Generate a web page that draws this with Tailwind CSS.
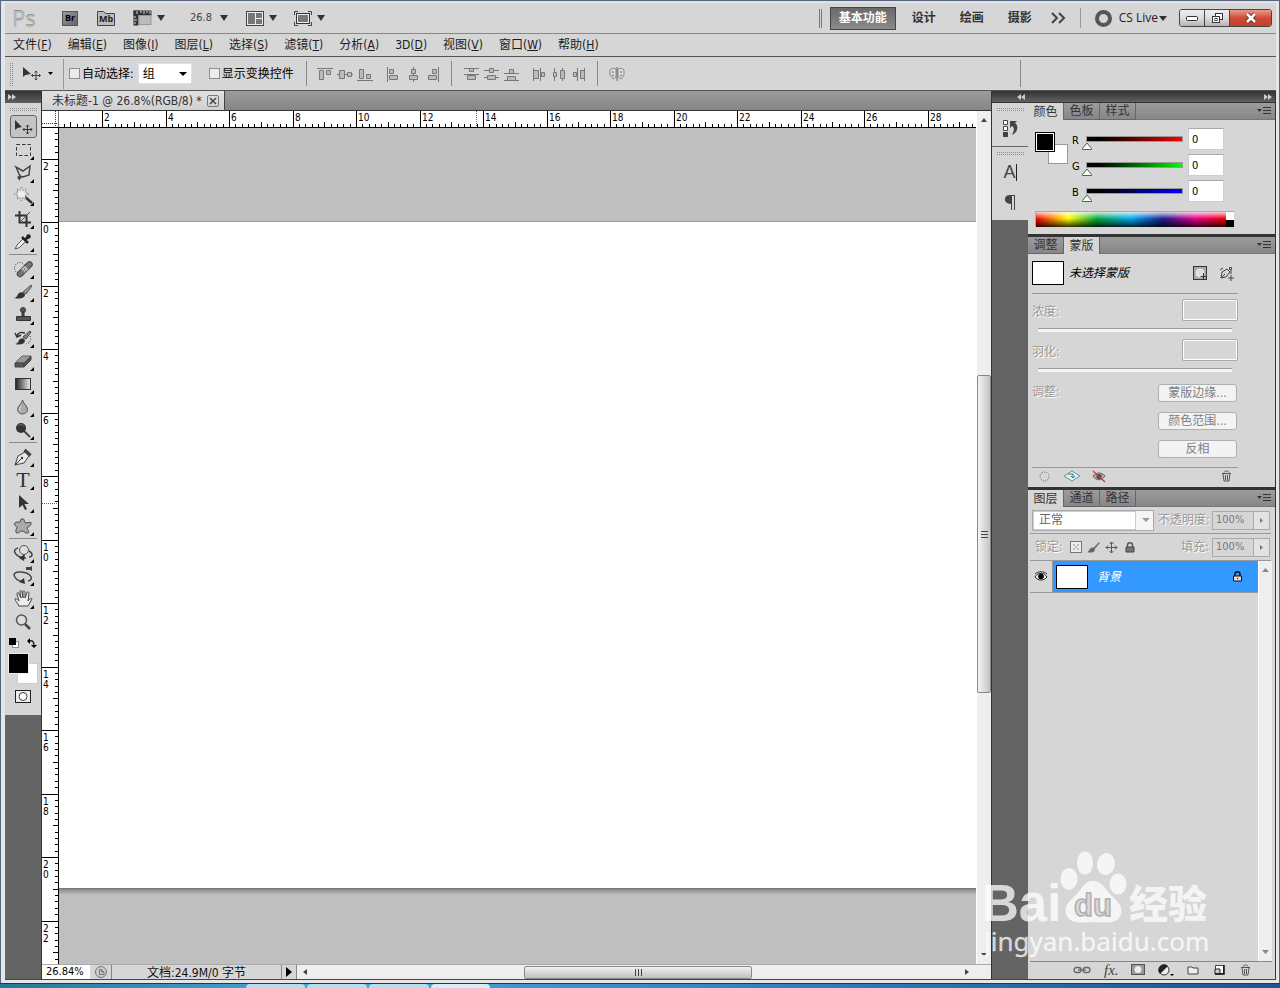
<!DOCTYPE html>
<html lang="zh-CN">
<head>
  <meta charset="UTF-8">
  <meta name="viewport" content="width=device-width, initial-scale=1.0">
  <title>未标题-1 - Photoshop</title>
  <script src="https://cdn.jsdelivr.net/npm/@tailwindcss/browser@4"></script>
  <style>
    .grip { background-image: linear-gradient(90deg, #d6d6d6 1px, transparent 1px), linear-gradient(#d6d6d6 1px, #8c8c8c 1px); background-size: 2px 2px; }
    .flyout::after { content: ""; position: absolute; right: 3px; bottom: 1px; border: 2px solid transparent; border-right-color: #000; border-bottom-color: #000; }
    .engraved { text-shadow: 1px 1px 0 #fff; }
  </style>
</head>
<body class="h-screen flex flex-col overflow-hidden bg-[#e3e3e3] text-xs leading-4 text-[#1c1c1c] font-['DejaVu_Sans_Condensed','Noto_Sans_CJK_SC',sans-serif]">

<div class="flex-1 min-h-0 flex flex-col border-x border-t border-[#56657f] pl-1 pr-[3px] pb-[3px] bg-[#e6e6e9]">

  <!-- Application bar -->
  <header class="h-8 shrink-0 flex items-center bg-[#d6d6d6] border-t-2 border-[#e4dfe4] pl-[7px] pr-1">
    <span class="w-[50px] text-[22px] leading-6 font-['Open_Sans'] text-[#b9b9b9] [text-shadow:0_-1px_0_#8e8e8e]">Ps</span>
    <button aria-label="Bridge" class="w-4 h-[15px] bg-linear-to-br from-[#999] to-[#666] border border-[#555] text-[9px] leading-3 font-bold font-['Open_Sans'] text-black">Br</button>
    <button aria-label="Mini Bridge" class="ml-[19px] relative w-[18px] h-[15px] flex justify-center">
      <svg class="absolute inset-0" width="18" height="15" viewBox="0 0 18 15"><path d="M.5 14.500V.5h6l2 2h9v12z" fill="#bbb" stroke="#444"/></svg>
      <span class="relative text-[9px] leading-4 font-bold font-['Open_Sans']">Mb</span>
    </button>
    <button aria-label="查看额外内容" class="ml-[18px] flex items-center gap-[5px]">
      <svg width="19" height="16" viewBox="0 0 19 16"><rect x=".5" y=".5" width="18" height="5" fill="#333"/><rect x=".5" y=".5" width="5" height="15" fill="#333"/><rect x="6" y="5.500" width="12" height="9" fill="#bbb" stroke="#999"/><path d="M4 1v3M8 1v2M11 1v3M14 1v2M17 1v3M1 7h2M1 10h3M1 13h2" stroke="#ddd"/></svg>
      <svg width="8" height="6"><path d="M0 0h8L4 6z" fill="#333"/></svg>
    </button>
    <button aria-label="缩放级别" class="ml-[25px] flex items-center gap-2 text-[11px] text-[#444]">26.8 <svg width="8" height="6"><path d="M0 0h8L4 6z" fill="#333"/></svg></button>
    <button aria-label="排列文档" class="ml-[18px] flex items-center gap-[5px]">
      <svg width="18" height="15" viewBox="0 0 18 15"><rect x=".5" y=".5" width="17" height="14" fill="#eee" stroke="#444"/><path d="M2 2h7v11H2zM10 2h6v5h-6zM10 8h6v5h-6z" fill="#777"/></svg>
      <svg width="8" height="6"><path d="M0 0h8L4 6z" fill="#333"/></svg>
    </button>
    <button aria-label="屏幕模式" class="ml-[17px] flex items-center gap-[5px]">
      <svg width="18" height="15" viewBox="0 0 18 15" fill="none" stroke="#444"><path d="M.5 4V.5H4M14 .5h3.500V4M17.500 11v3.500H14M4 14.500H.5V11"/><rect x="2.500" y="2.500" width="13" height="10" fill="#777" stroke="#333"/><rect x="3.500" y="3.500" width="11" height="8" stroke="#eee"/></svg>
      <svg width="8" height="6"><path d="M0 0h8L4 6z" fill="#333"/></svg>
    </button>

    <div class="ml-auto flex items-center font-bold text-[#333]">
      <i class="w-[3px] h-[19px] border-x border-[#777] mr-2"></i>
      <button class="w-[66px] h-[23px] border border-[#444] bg-linear-to-b from-[#6a6a6a] to-[#8a8a8a] text-white">基本功能</button>
      <button class="ml-4">设计</button>
      <button class="ml-6">绘画</button>
      <button class="ml-6">摄影</button>
      <button aria-label="更多工作区" class="ml-[19px]"><svg width="15" height="12" viewBox="0 0 15 12" fill="none" stroke="#444" stroke-width="2"><path d="M1 1l5 5-5 5M8 1l5 5-5 5"/></svg></button>
      <i class="ml-[14px] w-px h-5 bg-[#999]"></i>
      <button class="ml-[14px] flex items-center font-normal font-['Open_Sans'] text-[#222]">
        <svg class="mr-[7px]" width="17" height="17"><circle cx="8.500" cy="8.500" r="6.500" fill="none" stroke="#555" stroke-width="4"/></svg>CS Live
        <svg class="ml-px" width="8" height="5"><path d="M0 0h8L4 5z" fill="#333"/></svg>
      </button>
      <div class="ml-3 flex h-[18px] rounded-[3px] border border-[#444] overflow-hidden">
        <button aria-label="最小化" class="w-[25px] bg-linear-to-b from-[#eee] via-[#ddd] via-50% to-[#b5b5b5] border-r border-[#444] flex justify-center items-center"><svg width="13" height="6"><rect x=".5" y="1.500" width="11" height="4" rx="1" fill="#fff" stroke="#333"/></svg></button>
        <button aria-label="还原" class="w-[25px] bg-linear-to-b from-[#eee] via-[#ddd] via-50% to-[#b5b5b5] border-r border-[#444] flex justify-center items-center"><svg width="13" height="12" fill="#fff" stroke="#333"><rect x="4.500" y="1.500" width="7" height="6"/><rect x="1.500" y="4.500" width="7" height="6"/><rect x="4" y="6.500" width="2" height="2"/></svg></button>
        <button aria-label="关闭" class="w-[41px] bg-linear-to-b from-[#e99a8c] via-[#cf4a35] via-50% to-[#c5402c] flex justify-center items-center"><svg width="14" height="12"><path d="M3 2l8 8M11 2l-8 8" stroke="#5a3030" stroke-width="4.500"/><path d="M3 2l8 8M11 2l-8 8" stroke="#fff" stroke-width="2.500"/></svg></button>
      </div>
    </div>
  </header>

  <!-- Menu bar -->
  <nav class="h-6 shrink-0 flex items-center gap-4 pl-2 bg-[#d6d6d6] border-t border-b border-t-[#888] border-b-[#555]">
    <a href="#">文件(<u>F</u>)</a>
    <a href="#">编辑(<u>E</u>)</a>
    <a href="#">图像(<u>I</u>)</a>
    <a href="#">图层(<u>L</u>)</a>
    <a href="#">选择(<u>S</u>)</a>
    <a href="#">滤镜(<u>T</u>)</a>
    <a href="#">分析(<u>A</u>)</a>
    <a href="#">3D(<u>D</u>)</a>
    <a href="#">视图(<u>V</u>)</a>
    <a href="#">窗口(<u>W</u>)</a>
    <a href="#">帮助(<u>H</u>)</a>
  </nav>

  <!-- Options bar -->
  <div class="h-[34px] shrink-0 flex items-center bg-[#d6d6d6] border-b border-[#555] pl-1 text-black">
    <i class="grip w-1 h-6"></i>
    <button aria-label="移动工具预设" class="ml-[9px] flex items-center">
      <svg width="20" height="16" viewBox="0 0 20 16"><path d="M1 1v10l2.500-2L9 8z" fill="#333"/><path d="M14 5v9M9.500 9.500h9M12.500 6.500L14 5l1.500 1.500M12.500 12.500L14 14l1.500-1.500M11 8L9.500 9.500 11 11M17 8l1.500 1.500L17 11" fill="none" stroke="#444"/></svg>
      <svg class="ml-[6px]" width="5" height="3"><path d="M0 0h5L2.500 3z"/></svg>
    </button>
    <i class="ml-[10px] w-px h-[30px] bg-[#999]"></i>
    <label class="ml-[5px] flex items-center gap-[2px]"><input type="checkbox" class="appearance-none w-[11px] h-[11px] border border-[#8e8f8f] bg-[#ececec]">自动选择:</label>
    <select aria-label="自动选择" class="ml-1 w-[54px] h-[21px] appearance-none bg-white border border-[#dde] rounded-[2px] pl-1 leading-4">
      <option>组</option>
    </select>
    <svg class="-ml-[13px] pointer-events-none" width="8" height="4"><path d="M0 0h8L4 4z"/></svg>
    <label class="ml-[22px] flex items-center gap-[2px]"><input type="checkbox" class="appearance-none w-[11px] h-[11px] border border-[#8e8f8f] bg-[#ececec]">显示变换控件</label>
    <i class="ml-3 w-px h-[25px] bg-[#888]"></i>
    <div class="ml-[10px] flex gap-1 [&_svg]:w-4 [&_svg]:h-4 [&_svg]:fill-[#bbb] [&_svg]:stroke-[#777]">
      <button aria-label="顶对齐"><svg viewBox="0 0 16 16"><path d="M0 2.500h16"/><path d="M2.500 4.500h4v9h-4zM9.500 4.500h4v4h-4z"/></svg></button>
      <button aria-label="垂直居中对齐"><svg viewBox="0 0 16 16"><path d="M0 8.500h16"/><path d="M2.500 4.500h5v8h-5zM10.500 6.500h4v4h-4z"/></svg></button>
      <button aria-label="底对齐"><svg viewBox="0 0 16 16"><path d="M0 14.500h16"/><path d="M2.500 3.500h4v9h-4zM9.500 8.500h4v4h-4z"/></svg></button>
    </div>
    <div class="ml-3 flex gap-1 [&_svg]:w-4 [&_svg]:h-4 [&_svg]:fill-[#bbb] [&_svg]:stroke-[#777]">
      <button aria-label="左对齐"><svg viewBox="0 0 16 16"><path d="M2.500 1v15"/><path d="M4.500 3.500h4v4h-4zM4.500 9.500h8v4h-8z"/></svg></button>
      <button aria-label="水平居中对齐"><svg viewBox="0 0 16 16"><path d="M8.500 1v15"/><path d="M6.500 3.500h4v4h-4zM4.500 9.500h8v4h-8z"/></svg></button>
      <button aria-label="右对齐"><svg viewBox="0 0 16 16"><path d="M13.500 1v15"/><path d="M7.500 3.500h4v4h-4zM3.500 9.500h8v4h-8z"/></svg></button>
    </div>
    <i class="ml-[10px] w-px h-[25px] bg-[#888]"></i>
    <div class="ml-[11px] flex gap-1 [&_svg]:w-4 [&_svg]:h-4 [&_svg]:fill-[#bbb] [&_svg]:stroke-[#777]">
      <button aria-label="按顶分布"><svg viewBox="0 0 16 16"><path d="M1 2.500h15M1 8.500h15"/><path d="M6.500 2.500h4v3h-4zM4.500 9.500h8v4h-8z"/></svg></button>
      <button aria-label="按垂直居中分布"><svg viewBox="0 0 16 16"><path d="M1 4.500h15M1 11.500h15"/><path d="M6.500 2.500h4v4h-4zM4.500 9.500h8v4h-8z"/></svg></button>
      <button aria-label="按底分布"><svg viewBox="0 0 16 16"><path d="M1 7.500h15M1 14.500h15"/><path d="M6.500 3.500h4v4h-4zM4.500 10.500h8v4h-8z"/></svg></button>
    </div>
    <div class="ml-3 flex gap-1 [&_svg]:w-4 [&_svg]:h-4 [&_svg]:fill-[#bbb] [&_svg]:stroke-[#777]">
      <button aria-label="按左分布"><svg viewBox="0 0 16 16"><path d="M2.500 2v13M9.500 2v13"/><path d="M2.500 4.500h5v8h-5zM10.500 6.500h3v4h-3z"/></svg></button>
      <button aria-label="按水平居中分布"><svg viewBox="0 0 16 16"><path d="M3.500 2v13M11.500 2v13"/><path d="M2.500 6.500h3v4h-3zM9.500 4.500h4v8h-4z"/></svg></button>
      <button aria-label="按右分布"><svg viewBox="0 0 16 16"><path d="M6.500 2v13M13.500 2v13"/><path d="M2.500 6.500h3v4h-3zM9.500 4.500h4v8h-4z"/></svg></button>
    </div>
    <i class="ml-[10px] w-px h-[25px] bg-[#888]"></i>
    <button aria-label="自动对齐图层" class="ml-[11px]"><svg width="16" height="16" viewBox="0 0 16 16" stroke="#888" fill="#ddd"><path d="M1 4l3-2 3 1v8l-3 2-3-4zM15 4l-3-2-3 1v8l3 2 3-4z"/><path d="M3 6h2M11 6h2M3 9l2 1M13 9l-2 1M8 1v14" stroke="#666"/></svg></button>
    <i class="ml-auto mr-[255px] w-px h-[27px] bg-[#888]"></i>
  </div>

  <div class="flex-1 min-h-0 flex border-b border-[#444]">

    <!-- Tools -->
    <aside class="w-[37px] shrink-0 flex flex-col bg-[#646464] border-r border-[#333]">
      <div class="h-3 shrink-0 bg-linear-to-b from-[#333] to-[#606060] pl-[3px] flex items-center"><svg width="8" height="6"><path d="M0 0l4 3-4 3zM4 0l4 3-4 3z" fill="#ccc"/></svg></div>
      <div class="h-[612px] bg-[#d6d6d6] flex flex-col items-center pt-1 [&_button]:w-[27px] [&_button]:h-[23px] [&_button]:flex [&_button]:items-center [&_button]:justify-center [&_button]:relative [&_svg]:w-5 [&_svg]:h-5">
        <i class="grip w-7 h-1 mb-1 shrink-0"></i>
        <button aria-label="移动工具" class="border border-[#666] rounded-[3px] bg-[#c4c4c4]"><svg viewBox="0 0 20 20"><path d="M2 3v10l2.500-2L9 10z" fill="#333"/><path d="M14.500 8v9M10 12.500h9M13 9.500L14.500 8 16 9.500M13 15.500l1.500 1.500 1.500-1.500M11.500 11L10 12.500l1.500 1.500M17.500 11l1.500 1.500-1.500 1.500" fill="none" stroke="#333"/></svg></button>
        <button aria-label="矩形选框工具" class="flyout"><svg viewBox="0 0 20 20"><rect x="3.500" y="4.500" width="14" height="11" fill="none" stroke="#333" stroke-dasharray="3.500 2"/></svg></button>
        <button aria-label="多边形套索工具" class="flyout"><svg viewBox="0 0 20 20" fill="none" stroke="#444" stroke-width="1.500"><path d="M7 13L3 4l7 4 7-5-1 9-6 2-3-1M7 13c-3 1-2 3 0 2s1-2 0-2c1 2 0 3-1 4"/></svg></button>
        <button aria-label="魔棒工具" class="flyout"><svg viewBox="0 0 20 20"><path d="M11 10l8 7" stroke="#333" stroke-width="2.500"/><path d="M8.500 1l1.200 3.500 3.500-1.500L12 6.500l4 1.500-4 1.500 1 3.500-3.300-1.500L8.500 15l-1.200-3.500L4 13l1.200-3.500L1 8l4-1.500L4 3l3.300 1.500z" fill="#eee" stroke="#888" stroke-dasharray="2 1"/></svg></button>
        <button aria-label="裁剪工具" class="flyout"><svg viewBox="0 0 20 20" fill="none"><path d="M6.500 2v11.500H18M2 6.500h11.500V18" stroke="#333" stroke-width="2"/><path d="M7 13L17 3" stroke="#555"/></svg></button>
        <button aria-label="吸管工具" class="flyout"><svg viewBox="0 0 20 20"><path d="M2 17l2-4 6-6 2.500 2.500-6 6z" fill="#eee" stroke="#555"/><path d="M9 5l6 6M12 8l3-3" stroke="#222" stroke-width="2.500"/><circle cx="15.500" cy="4.500" r="2.300" fill="#222"/></svg></button>
        <i class="w-7 h-px mt-px mb-[2px] shrink-0 bg-[#888]"></i>
        <button aria-label="污点修复画笔工具" class="flyout"><svg viewBox="0 0 20 20"><circle cx="7" cy="9" r="5.500" fill="none" stroke="#333" stroke-dasharray="1 1.500"/><path d="M7 15L16.500 5.500" stroke="#444" stroke-width="6.500" stroke-linecap="round"/><path d="M7 15L16.500 5.500" stroke="#777" stroke-width="4.500" stroke-linecap="round"/><path d="M10 12l3.500-3.500" stroke="#bbb" stroke-width="5"/><path d="M11 10h1M12 12h1M10 12h1" stroke="#555"/></svg></button>
        <button aria-label="画笔工具" class="flyout"><svg viewBox="0 0 20 20"><path d="M10 10l8-7 1 1-6 8z" fill="#999" stroke="#555"/><path d="M1 16c3 0 3-3 5-5 3-2 6 0 6 2-1 4-7 4-11 3z" fill="#333"/></svg></button>
        <button aria-label="仿制图章工具" class="flyout"><svg viewBox="0 0 20 20" fill="#555" stroke="#333"><circle cx="10" cy="5" r="2.500"/><path d="M9 7h2v4H9zM3.500 11.500h14v4h-14z"/></svg></button>
        <button aria-label="历史记录画笔工具" class="flyout"><svg viewBox="0 0 20 20"><path d="M10 9l7-6 1 1-5 7z" fill="#888" stroke="#444"/><path d="M2 16c3 0 3-3 5-5 3-2 5 0 5 2-1 4-6 4-10 3z" fill="#333"/><path d="M4 8c1-4 5-4 8-3M2 5l2 4 4-2" fill="none" stroke="#333" stroke-width="1.500"/><path d="M17 8c2 4 0 7-4 8" fill="none" stroke="#444" stroke-dasharray="1 1.500"/></svg></button>
        <button aria-label="橡皮擦工具" class="flyout"><svg viewBox="0 0 20 20"><path d="M2 12l7-7h9l-7 7z" fill="#999" stroke="#666"/><path d="M2 12h9v4H2zM11 12l7-7v4l-7 7z" fill="#555" stroke="#444"/></svg></button>
        <button aria-label="渐变工具" class="flyout"><svg viewBox="0 0 20 20"><defs><linearGradient id="ramp"><stop stop-color="#222"/><stop offset="1" stop-color="#eee"/></linearGradient></defs><rect x="2.500" y="4.500" width="15" height="11" fill="url(#ramp)" stroke="#333"/></svg></button>
        <button aria-label="模糊工具" class="flyout"><svg viewBox="0 0 20 20"><path d="M9.500 3c1 4 5 6 5 9.500a5 4.500 0 01-10 0C4.500 9 9 7 9.500 3z" fill="#aaa" stroke="#555"/><path d="M8 9c-2 3-1 5 0 5" stroke="#ddd" fill="none"/></svg></button>
        <button aria-label="加深工具" class="flyout"><svg viewBox="0 0 20 20"><path d="M11 11l6 6" stroke="#444" stroke-width="2"/><circle cx="8" cy="8" r="5" fill="#333"/><path d="M5 6c1-2 4-2 6 0" stroke="#777" fill="none"/></svg></button>
        <i class="w-7 h-px mt-px mb-[2px] shrink-0 bg-[#888]"></i>
        <button aria-label="钢笔工具" class="flyout"><svg viewBox="0 0 20 20"><path d="M2 18l3-9 7-4 4 4-5 7z" fill="#e8e8e8" stroke="#444"/><path d="M2 18l6-6" stroke="#333"/><circle cx="9" cy="11" r="1.200" fill="#333"/><path d="M11.500 3l6 5.500" stroke="#444" stroke-width="3.500"/></svg></button>
        <button aria-label="横排文字工具" class="flyout font-['Liberation_Serif'] text-[22px] text-[#333]">T</button>
        <button aria-label="路径选择工具" class="flyout"><svg viewBox="0 0 20 20"><path d="M6 2v13l3.500-3 2.500 5 2-1-2.500-5H16z" fill="#333"/></svg></button>
        <button aria-label="自定形状工具" class="flyout"><svg viewBox="0 0 20 20"><path d="M9 3c3-1 2 4 4 4s6-2 5 1-4 3-4 4 3 4 1 5-4-2-6-2-5 4-6 1 2-4 1-5-4-2-2-4 4 0 5-1 0-3 2-3z" fill="#aaa" stroke="#444"/></svg></button>
        <i class="w-7 h-px mt-px mb-[2px] shrink-0 bg-[#888]"></i>
        <button aria-label="3D 对象旋转工具" class="flyout"><svg viewBox="0 0 20 20"><path d="M5 5c-8 2-1 10 8 10M16 8c4 2 4 6 0 6" fill="none" stroke="#444" stroke-width="1.500"/><path d="M12 11l-1 7-5-3z" fill="#333"/><circle cx="11" cy="7" r="4.500" fill="#ddd" stroke="#555"/></svg></button>
        <button aria-label="3D 旋转相机工具" class="flyout"><svg viewBox="0 0 20 20"><path d="M8 6c-11-1-8 8 3 10M8 6c11 1 13 8 7 9" fill="none" stroke="#444" stroke-width="1.500"/><path d="M11 12l1 6-6-2z" fill="#333"/><path d="M13 1h4l2-1v5l-2-1h-4z" fill="#444"/></svg></button>
        <button aria-label="抓手工具" class="flyout"><svg viewBox="0 0 20 20"><path d="M6 17c-1-3-4-5-4-7 1-1 2 0 4 2L4 5c0-2 2-2 2 0l2 4-1-6c0-2 2-2 2 0l1 6V3c0-2 2-1 2 0v6l2-5c0-2 2-1 2 0l-1 8c2-3 4-3 4-2l-4 7z" fill="#eee" stroke="#444"/></svg></button>
        <button aria-label="缩放工具"><svg viewBox="0 0 20 20"><path d="M12 12l5 5" stroke="#444" stroke-width="2.500"/><circle cx="8.500" cy="8" r="5" fill="#ddd" stroke="#555" stroke-width="1.500"/></svg></button>
        <div class="w-7 h-3 mt-[5px] shrink-0 flex justify-between">
          <svg class="max-w-[10px] max-h-[10px]" viewBox="0 0 10 10"><rect x="3.500" y="3.500" width="6" height="6" fill="#fff" stroke="#888"/><rect width="7" height="7"/></svg>
          <svg class="max-w-[10px] max-h-[10px]" viewBox="0 0 10 10"><path d="M2 3c4-1 5 1 5 5" fill="none" stroke="#222" stroke-width="1.500"/><path d="M0 3l3-3v6zM4 7h6L7 10z"/></svg>
        </div>
        <div class="relative w-[30px] h-[31px] mt-[3px] shrink-0">
          <i class="absolute right-0 bottom-0 w-[21px] h-[21px] bg-white border border-[#ccc]"></i>
          <i class="absolute left-0 top-0 w-[21px] h-[21px] bg-black border border-[#eee]"></i>
        </div>
        <button aria-label="快速蒙版"><svg viewBox="0 0 20 20"><rect x="2.500" y="4.500" width="15" height="12" fill="#eee" stroke="#222"/><circle cx="10" cy="10.500" r="4" fill="#fff" stroke="#444"/></svg></button>
      </div>
    </aside>

    <!-- Document -->
    <main class="flex-1 min-w-0 flex flex-col bg-[#d6d6d6]">
      <div class="h-5 shrink-0 flex bg-linear-to-b from-[#9c9c9c] to-[#858585] border-b border-[#333]">
        <div class="w-[183px] flex items-center pl-[10px] bg-linear-to-b from-[#e2e2e2] to-[#d0d0d0] border-r border-[#444] text-[#333]">未标题-1 @ 26.8%(RGB/8) *
          <button aria-label="关闭文档" class="ml-auto mr-[5px]"><svg width="12" height="12" viewBox="0 0 12 12" fill="none" stroke="#444"><rect x=".5" y=".5" width="11" height="11" rx="1.500" stroke="#777"/><path d="M3 3l6 6M9 3l-6 6" stroke-width="1.500"/></svg></button>
        </div>
      </div>
      <div class="flex-1 min-h-0 flex">
        <div class="flex-1 min-w-0 flex flex-col bg-white">
          <div class="h-[17px] shrink-0 flex border-b border-black">
            <svg class="w-[17px] h-4 shrink-0 border-r border-[#777]"><path d="M13.500 0v16M0 12.500h17" stroke="#333" stroke-dasharray="1 1"/></svg>
            <svg id="ruler-x" class="flex-1 min-w-0 h-4" font-size="10"></svg>
          </div>
          <div class="flex-1 min-h-0 flex">
            <svg id="ruler-y" class="w-[17px] h-full shrink-0 border-r border-black" font-size="10"></svg>
            <div class="flex-1 flex flex-col bg-[#bfbfbf]">
              <div class="h-[94px] shrink-0 border-b border-[#999]"></div>
              <div class="flex-1 bg-white"></div>
              <div class="h-[76px] shrink-0 border-t border-[#777] bg-linear-to-b from-[#888] to-[#bfbfbf] to-[6px]"></div>
            </div>
          </div>
        </div>
        <div class="w-[15px] shrink-0 flex flex-col items-center bg-[#eee] border-l border-white py-[7px]">
          <svg width="6" height="4" class="shrink-0"><path d="M0 4l3-4 3 4z" fill="#444"/></svg>
          <div class="flex-1 w-full flex flex-col">
            <div class="h-[253px] shrink-0"></div>
            <div class="h-[318px] border border-[#888] rounded-[2px] bg-linear-to-r from-[#f4f4f4] to-[#c4c4c8] flex items-center justify-center"><svg width="7" height="9"><path d="M0 1.500h7M0 4.500h7M0 7.500h7" stroke="#444"/></svg></div>
          </div>
          <svg width="6" height="4" class="shrink-0"><path d="M0 0h6L3 4z" fill="#444"/></svg>
        </div>
      </div>
      <div class="h-[15px] shrink-0 flex border-t border-[#aaa] text-black">
        <input aria-label="缩放" value="26.84%" class="w-[48px] bg-white pl-1 text-[11px] leading-4">
        <div class="w-[21px] flex items-center justify-center"><svg width="12" height="12" viewBox="0 0 12 12" fill="#ccc" stroke="#777"><circle cx="6" cy="6" r="5.500"/><path d="M4.500 3.500h2l2.500 2.500v2.500h-4.500zM6.500 3.500v2.500h2.500"/></svg></div>
        <div class="w-[171px] border-x border-[#888] text-center leading-4 text-[#111]">文档:24.9M/0 字节</div>
        <button aria-label="状态栏选项" class="w-[15px] border-r border-[#888] flex items-center justify-center"><svg width="6" height="10"><path d="M0 0l6 5-6 5z"/></svg></button>
        <div class="flex-1 flex items-center bg-[#eee] px-[6px]">
          <svg width="4" height="6"><path d="M4 0L0 3l4 3z" fill="#444"/></svg>
          <div class="w-[217px]"></div>
          <div class="w-[228px] h-[13px] border border-[#888] rounded-[2px] bg-linear-to-b from-[#f0f0f0] to-[#c0c0c0] flex items-center justify-center"><svg width="9" height="7"><path d="M1.500 0v7M4.500 0v7M7.500 0v7" stroke="#444"/></svg></div>
          <svg class="ml-auto mr-4" width="4" height="6"><path d="M0 0l4 3-4 3z" fill="#444"/></svg>
        </div>
      </div>
    </main>

    <!-- Dock -->
    <aside class="w-[285px] shrink-0 flex flex-col bg-[#646464] border-x border-[#333]">
      <div class="h-3 shrink-0 flex items-center justify-between bg-linear-to-b from-[#333] to-[#606060] pl-[25px] pr-[3px] border-b border-[#333]">
        <svg width="8" height="6"><path d="M4 0L0 3l4 3zM8 0L4 3l4 3z" fill="#ccc"/></svg>
        <svg width="8" height="6"><path d="M0 0l4 3-4 3zM4 0l4 3-4 3z" fill="#ccc"/></svg>
      </div>
      <div class="flex-1 min-h-0 flex">
        <div class="w-9 shrink-0 text-[#444]">
          <div class="h-[43px] bg-[#d6d6d6] flex flex-col items-center pt-1">
            <i class="grip w-7 h-1"></i>
            <button aria-label="历史记录" class="mt-2"><svg width="16" height="18" viewBox="0 0 16 18"><path d="M1.500 1.500h4v4h-4zM1.500 7.500h4v4h-4z" fill="#fff" stroke="#444"/><path d="M1 13h5v5H1z" fill="#444"/><path d="M8 2h7l-2 2c4 3 3 9-3 12 2-4 3-7 0-9L8 9z" fill="#444"/></svg></button>
          </div>
          <div class="mt-px h-[73px] bg-[#d6d6d6] flex flex-col items-center pt-1">
            <i class="grip w-7 h-1 shrink-0"></i>
            <button aria-label="字符" class="mt-[7px] flex items-center text-[18px] leading-5 font-['Liberation_Sans']">A<i class="w-px h-[17px] bg-[#222]"></i></button>
            <button aria-label="段落" class="mt-[13px]"><svg width="12" height="15" viewBox="0 0 12 15"><path d="M6 0h5v15h-1V1H8v14H7V9C-1 9-1 0 6 0z" fill="#444"/></svg></button>
          </div>
        </div>

        <div class="flex-1 min-w-0 flex flex-col bg-[#333] text-[#333]">
          <!-- Color -->
          <section class="bg-[#d6d6d6]">
            <div class="h-[17px] flex bg-linear-to-b from-[#9c9c9c] to-[#858585]">
              <button class="w-9 bg-[#d6d6d6] border-r border-[#666]">颜色</button>
              <button class="w-9 border-r border-b border-[#666]">色板</button>
              <button class="w-9 border-r border-b border-[#666]">样式</button>
              <button aria-label="面板菜单" class="flex-1 flex justify-end items-center pr-1 border-b border-[#777]"><svg width="14" height="9" fill="none" stroke="#333"><path d="M0 2h5L2.500 5z" fill="#333" stroke="none"/><path d="M6 .5h8M6 3.500h8M6 6.500h8"/></svg></button>
            </div>
            <div class="h-[114px] pl-[7px] pt-[9px] text-black">
              <div class="flex">
                <div class="relative w-[33px] h-8 mt-[3px]">
                  <i class="absolute right-0 bottom-0 w-5 h-5 bg-white border border-[#999]"></i>
                  <i class="absolute left-0 top-0 w-5 h-5 bg-black border border-black ring-1 ring-inset ring-white"></i>
                </div>
                <div class="ml-1 flex flex-col gap-[6px]">
                  <label class="h-5 flex items-center text-[11px]"><span class="w-[14px] pt-[3px]">R</span>
                    <span class="relative w-[97px] h-[14px]"><span class="block h-[6px] mt-1 border border-[#999] bg-linear-to-r from-black to-[#f00]"></span><svg class="absolute -left-1 top-[10px]" width="10" height="8"><path d="M.5 6.500L5 1l4.500 5.500v1h-9z" fill="#fff" stroke="#2b7a2b"/></svg><input type="range" value="0" max="255" class="absolute inset-0 w-full h-full opacity-0"></span>
                    <input aria-label="R 值" value="0" class="ml-[5px] w-9 h-[22px] bg-white border border-[#ccd] border-t-[#aaa] pl-[3px]"></label>
                  <label class="h-5 flex items-center text-[11px]"><span class="w-[14px] pt-[3px]">G</span>
                    <span class="relative w-[97px] h-[14px]"><span class="block h-[6px] mt-1 border border-[#999] bg-linear-to-r from-black to-[#0f0]"></span><svg class="absolute -left-1 top-[10px]" width="10" height="8"><path d="M.5 6.500L5 1l4.500 5.500v1h-9z" fill="#fff" stroke="#2b7a2b"/></svg><input type="range" value="0" max="255" class="absolute inset-0 w-full h-full opacity-0"></span>
                    <input aria-label="G 值" value="0" class="ml-[5px] w-9 h-[22px] bg-white border border-[#ccd] border-t-[#aaa] pl-[3px]"></label>
                  <label class="h-5 flex items-center text-[11px]"><span class="w-[14px] pt-[3px]">B</span>
                    <span class="relative w-[97px] h-[14px]"><span class="block h-[6px] mt-1 border border-[#999] bg-linear-to-r from-black to-[#00f]"></span><svg class="absolute -left-1 top-[10px]" width="10" height="8"><path d="M.5 6.500L5 1l4.500 5.500v1h-9z" fill="#fff" stroke="#2b7a2b"/></svg><input type="range" value="0" max="255" class="absolute inset-0 w-full h-full opacity-0"></span>
                    <input aria-label="B 值" value="0" class="ml-[5px] w-9 h-[22px] bg-white border border-[#ccd] border-t-[#aaa] pl-[3px]"></label>
                </div>
              </div>
              <div class="mt-[10px] w-[199px] h-4 flex border-t border-l border-[#aaa]">
                <div class="flex-1 bg-[linear-gradient(to_bottom,#fffc,transparent_45%,#000c),linear-gradient(to_right,#e00,#ff0_17%,#00a63c_32%,#00a8f0_50%,#1c1c8c_67%,#e6008c_84%,#e00)]"></div>
                <div class="w-2 bg-linear-to-b from-white from-50% to-black to-50%"></div>
              </div>
            </div>
          </section>

          <!-- Masks -->
          <section class="mt-[3px] bg-[#d6d6d6]">
            <div class="h-[17px] flex bg-linear-to-b from-[#9c9c9c] to-[#858585]">
              <button class="w-9 border-r border-b border-[#666]">调整</button>
              <button class="w-9 bg-[#d6d6d6] border-r border-[#666]">蒙版</button>
              <button aria-label="面板菜单" class="flex-1 flex justify-end items-center pr-1 border-b border-[#777]"><svg width="14" height="9" fill="none" stroke="#333"><path d="M0 2h5L2.500 5z" fill="#333" stroke="none"/><path d="M6 .5h8M6 3.500h8M6 6.500h8"/></svg></button>
            </div>
            <div class="h-[233px] pl-1 pr-[37px] pt-[7px] text-[#999]">
              <div class="flex items-center h-6">
                <i class="w-8 h-6 bg-white border border-black"></i>
                <em class="ml-[5px] text-black">未选择蒙版</em>
                <button aria-label="添加像素蒙版" class="ml-auto"><svg width="14" height="14" viewBox="0 0 14 14" fill="none" stroke="#333"><rect x=".5" y=".5" width="13" height="13" fill="#aaa"/><circle cx="7" cy="7" r="4" fill="#ddd" stroke="#eee"/><path d="M10.500 7v6M7.500 10.500h6"/></svg></button>
                <button aria-label="添加矢量蒙版" class="ml-3 mr-1"><svg width="15" height="15" viewBox="0 0 15 15" fill="none" stroke="#444"><path d="M2 12l1-6 5-3 3 3-4 5-5 1zM2 12l4-4M1 4l3-2M12 8V4M10.500 1.500h2v2h-2zM12 9v6M9 12h6"/></svg></button>
              </div>
              <i class="block mt-2 h-px bg-[#999]"></i>
              <div class="mt-[5px] flex items-center justify-between"><label for="density" class="engraved pt-[3px]">浓度:</label><input id="density" disabled class="w-14 h-[22px] border border-[#aaa] ring-1 ring-inset ring-white rounded-[2px]"></div>
              <input type="range" aria-label="浓度" disabled class="appearance-none block mx-[6px] w-[194px] mt-[7px] h-1 border-t border-[#999] bg-[#f4f4f4] [&::-webkit-slider-thumb]:opacity-0">
              <div class="mt-[7px] flex items-center justify-between"><label for="feather" class="engraved pt-[3px]">羽化:</label><input id="feather" disabled class="w-14 h-[22px] border border-[#aaa] ring-1 ring-inset ring-white rounded-[2px]"></div>
              <input type="range" aria-label="羽化" disabled class="appearance-none block mx-[6px] w-[194px] mt-[7px] h-1 border-t border-[#999] bg-[#f4f4f4] [&::-webkit-slider-thumb]:opacity-0">
              <div class="mt-3 flex justify-between">
                <span class="engraved">调整:</span>
                <div class="flex flex-col gap-[10px] mr-px [&_button]:w-[79px] [&_button]:h-[18px] [&_button]:border [&_button]:border-[#aab0b4] [&_button]:rounded-[3px] [&_button]:bg-[#f3f3f3] [&_button]:text-[#808080]">
                  <button disabled>蒙版边缘...</button>
                  <button disabled>颜色范围...</button>
                  <button disabled>反相</button>
                </div>
              </div>
              <i class="block mt-[9px] h-px bg-[#999]"></i>
              <div class="h-4 flex items-center pl-[7px] pr-[6px]">
                <svg width="11" height="11"><circle cx="5.500" cy="5.500" r="4.500" fill="none" stroke="#555" stroke-dasharray="1 1.500"/></svg>
                <svg class="ml-[13px]" width="18" height="12" viewBox="0 0 18 12"><path d="M1 6l8-5 8 5-8 5z" fill="#dfeee8" stroke="#6a9a8a"/><path d="M5 4h5v4M8 6l2 2 2-2" fill="none" stroke="#2a7aaa"/></svg>
                <svg class="ml-[11px]" width="14" height="13" viewBox="0 0 14 13"><path d="M1 6c3-4 9-4 12 0-3 5-9 5-12 0z" fill="#aaa" stroke="#666"/><circle cx="7" cy="6.500" r="2.500" fill="#444"/><path d="M1 1l12 11" stroke="#d33" stroke-width="1.300"/></svg>
                <svg class="ml-auto" width="11" height="12" viewBox="0 0 11 12" fill="none" stroke="#555"><path d="M1 3.500h9M3 2.500c1-2 4-2 5 0M2 4l1 7h5l1-7M4.500 5v5M6.500 5v5"/></svg>
              </div>
            </div>
          </section>

          <!-- Layers -->
          <section class="mt-[3px] flex-1 min-h-0 flex flex-col bg-[#d6d6d6]">
            <div class="h-[17px] shrink-0 flex bg-linear-to-b from-[#9c9c9c] to-[#858585]">
              <button class="w-9 bg-[#d6d6d6] border-r border-[#666]">图层</button>
              <button class="w-9 border-r border-b border-[#666]">通道</button>
              <button class="w-9 border-r border-b border-[#666]">路径</button>
              <button aria-label="面板菜单" class="flex-1 flex justify-end items-center pr-1 border-b border-[#777]"><svg width="14" height="9" fill="none" stroke="#333"><path d="M0 2h5L2.500 5z" fill="#333" stroke="none"/><path d="M6 .5h8M6 3.500h8M6 6.500h8"/></svg></button>
            </div>
            <div class="h-[27px] shrink-0 flex items-center ml-[2px] mr-1 pl-[2px] border-b border-[#999] text-[#999]">
              <div class="w-[122px] h-[21px] flex items-center border border-[#aaa] bg-[#f6f6f6]">
                <select aria-label="混合模式" disabled class="appearance-none w-[103px] h-[19px] bg-white border border-[#ccc] pl-[5px] text-[#666] opacity-100"><option>正常</option></select>
                <svg class="ml-[6px]" width="8" height="4"><path d="M0 0h8L4 4z" fill="#999"/></svg>
              </div>
              <label for="opacity" class="engraved ml-1">不透明度:</label>
              <div class="ml-auto mr-px w-[58px] h-[19px] flex border border-[#aaa]">
                <input id="opacity" value="100%" disabled class="w-10 pl-[3px] text-[11px] text-[#777]">
                <button aria-label="调整不透明度" class="flex-1 border-l border-[#aaa] bg-[#e2e2e2] flex items-center justify-center"><svg width="3" height="5"><path d="M0 0l3 2.500L0 5z" fill="#777"/></svg></button>
              </div>
            </div>
            <div class="h-[27px] shrink-0 flex items-center ml-[2px] mr-1 pl-[5px] border-b border-[#999] text-[#999]">
              <span class="engraved">锁定:</span>
              <svg class="ml-[7px]" width="12" height="12" viewBox="0 0 12 12"><rect x=".5" y=".5" width="11" height="11" fill="#eee" stroke="#777"/><path d="M3 3h2v2H3zM7 3h2v2H7zM5 5h2v2H5zM3 7h2v2H3zM7 7h2v2H7z" fill="#bbb"/></svg>
              <svg class="ml-[5px]" width="13" height="12" viewBox="0 0 13 12"><path d="M6 7l6-6 1 1-5 6z" fill="#777"/><path d="M0 11c2 0 2-3 4-4 2-1 4 0 4 2-1 3-5 3-8 2z" fill="#666"/></svg>
              <svg class="ml-[5px]" width="13" height="13" viewBox="0 0 13 13" fill="none" stroke="#555"><path d="M6.500 1v11M1 6.500h11M4.500 3l2-2 2 2M4.500 10l2 2 2-2M3 4.500l-2 2 2 2M10 4.500l2 2-2 2"/></svg>
              <svg class="ml-[7px]" width="10" height="11" viewBox="0 0 10 11"><path d="M2.500 5V3c0-3 5-3 5 0v2" fill="none" stroke="#555" stroke-width="1.500"/><path d="M1 5h8v5H1z" fill="#777" stroke="#444"/></svg>
              <label for="fill" class="engraved ml-auto">填充:</label>
              <div class="ml-[3px] mr-px w-[58px] h-[19px] flex border border-[#aaa]">
                <input id="fill" value="100%" disabled class="w-10 pl-[3px] text-[11px] text-[#777]">
                <button aria-label="调整填充" class="flex-1 border-l border-[#aaa] bg-[#e2e2e2] flex items-center justify-center"><svg width="3" height="5"><path d="M0 0l3 2.500L0 5z" fill="#777"/></svg></button>
              </div>
            </div>
            <div class="flex-1 min-h-0 flex ml-[2px] mr-[3px] border-b border-[#888]">
              <div class="flex-1">
                <div class="h-8 flex items-center border-b border-[#999]">
                  <button aria-label="显示图层" class="w-[23px] h-full border-r border-[#999] flex items-center justify-center"><svg width="14" height="11" viewBox="0 0 14 11"><path d="M1 6c3-5 9-5 12 0-3 4-9 4-12 0z" fill="#eee" stroke="#222"/><circle cx="7" cy="5.500" r="2.800"/><path d="M1 3c3-3 9-3 12 0" fill="none" stroke="#333"/></svg></button>
                  <div class="flex-1 h-full flex items-center bg-[#3399ff] text-white pl-[3px] pr-[15px]">
                    <i class="w-8 h-6 bg-white border border-black"></i>
                    <em class="ml-[9px]">背景</em>
                    <svg class="ml-auto" width="11" height="11" viewBox="0 0 11 11"><path d="M3 5V3c0-3 5-3 5 0v2" fill="none" stroke="#111" stroke-width="1.500"/><path d="M1.500 5h8v5h-8z" fill="#ddd" stroke="#111"/><path d="M5 7h1v1H5z"/></svg>
                  </div>
                </div>
              </div>
              <div class="w-[14px] bg-[#eee] flex flex-col items-center justify-between py-[7px] border-l border-white">
                <svg width="7" height="4"><path d="M0 4l3.500-4L7 4z" fill="#888"/></svg>
                <svg width="7" height="4"><path d="M0 0h7L3.500 4z" fill="#888"/></svg>
              </div>
            </div>
            <div class="h-[17px] shrink-0 flex items-center justify-end gap-[13px] pr-6 pb-[2px]">
              <svg width="18" height="8" viewBox="0 0 18 8" fill="none" stroke="#666" stroke-width="1.300"><rect x="1" y="1.500" width="7" height="5" rx="2.500"/><rect x="10" y="1.500" width="7" height="5" rx="2.500"/><path d="M5 4h8"/></svg>
              <span class="w-[14px] text-[15px] italic leading-4 font-['Liberation_Serif'] text-[#444]">fx.</span>
              <svg width="14" height="11" viewBox="0 0 14 11"><rect x=".5" y=".5" width="13" height="10" fill="#999" stroke="#555"/><circle cx="7" cy="5.500" r="3.500" fill="#eee"/></svg>
              <svg width="16" height="12" viewBox="0 0 16 12"><circle cx="6" cy="6" r="5" fill="#eee" stroke="#333"/><path d="M10 2a5 5 0 00-8 8z" fill="#222"/><path d="M12 10h4l-2 2z"/></svg>
              <svg width="12" height="10" viewBox="0 0 12 10"><path d="M1 9V2h4l1 1h5v6z" fill="#eee" stroke="#444"/></svg>
              <svg class="ml-[2px]" width="11" height="11" viewBox="0 0 11 11"><path d="M1.500 1.500h8v8h-8z" fill="#fff" stroke="#444"/><path d="M1 5h5v5H1z" fill="#ccc" stroke="#222"/><path d="M10 1v9H1" fill="none" stroke="#111" stroke-width="1.500"/></svg>
              <svg class="ml-[2px]" width="11" height="12" viewBox="0 0 11 12" fill="none" stroke="#555"><path d="M1 3.500h9M3 2.500c1-2 4-2 5 0M2 4l1 7h5l1-7M4.500 5v5M6.500 5v5"/></svg>
            </div>
          </section>
        </div>
      </div>
    </aside>
  </div>
</div>

<!-- Desktop taskbar edge -->
<footer class="h-[5px] shrink-0 flex gap-[2px] pl-[246px] border-t border-[#1d3a5a] bg-linear-to-r from-[#1f7d96] via-[#4aa8dc] via-25% to-[#1d568f]">
  <i class="w-[59px] rounded-t bg-[#b9dcee]"></i>
  <i class="w-[60px] rounded-t bg-[#b9dcee]"></i>
  <i class="w-[60px] rounded-t bg-[#b9dcee]"></i>
  <i class="w-[59px] rounded-t bg-[#d6edf7]"></i>
</footer>

<!-- Watermark -->
<svg class="absolute right-[66px] bottom-[28px] w-[232px] h-[112px] pointer-events-none" viewBox="0 0 232 112" fill="#fff" fill-opacity=".75">
  <text x="0" y="73" font-size="51" font-weight="bold" font-family="Liberation Sans">Bai</text>
  <g><ellipse cx="87" cy="31" rx="8.500" ry="11"/><ellipse cx="103" cy="15" rx="8" ry="11.500"/><ellipse cx="124" cy="16" rx="9" ry="11" transform="rotate(10 124 16)"/><ellipse cx="136" cy="36" rx="8.500" ry="10.500"/><path d="M111 33c9 0 12 8 18 14 8 8 12 12 10 19-3 10-14 9-27 8-13 1-25 2-28-8-2-7 2-12 9-18 7-7 9-15 18-15z"/></g>
  <text x="92" y="68" font-size="31" font-weight="bold" font-family="Liberation Sans" fill="#d8d8d8" fill-opacity="1" stroke="#b0b0b0" stroke-width="1.500">du</text>
  <text x="147" y="70" font-size="39" font-weight="900" font-family="Noto Sans CJK SC">经验</text>
  <text x="2" y="103" font-size="26" font-family="Noto Sans" stroke="#fff" stroke-opacity=".4" stroke-width=".5">jingyan.baidu.com</text>
</svg>

<script>
  const NS = 'http://www.w3.org/2000/svg';
  const UNIT = 63.5; // screen pixels per two centimetres

  function add(svg, tag, attrs, text) {
    const el = document.createElementNS(NS, tag);
    for (const key in attrs) el.setAttribute(key, attrs[key]);
    if (text !== undefined) el.textContent = text;
    svg.appendChild(el);
  }

  function drawRuler(svg, origin, cursor, vertical) {
    const box = svg.getBoundingClientRect();
    const size = vertical ? box.height : box.width;
    svg.replaceChildren();
    for (let i = -30; ; i++) {
      const pos = Math.round(origin + i * UNIT / 10);
      if (pos < 0) continue;
      if (pos >= size) break;
      const len = i % 10 === 0 ? 16 : i % 5 === 0 ? 5 : 3;
      add(svg, 'rect', vertical
        ? { x: 16 - len, y: pos, width: len, height: 1 }
        : { x: pos, y: 16 - len, width: 1, height: len });
      if (i % 10 !== 0 || pos + 22 > size) continue;
      const label = String(Math.abs(i / 10 * 2));
      if (vertical) [...label].forEach((ch, n) => add(svg, 'text', { x: 1, y: pos + 11 + n * 10 }, ch));
      else add(svg, 'text', { x: pos + 2, y: 10 }, label);
    }
    add(svg, 'path', { d: vertical ? `M0 ${cursor}h16` : `M${cursor} 0v16`, stroke: '#666', 'stroke-dasharray': '1 1' });
  }

  const rulerX = document.getElementById('ruler-x');
  const rulerY = document.getElementById('ruler-y');
  new ResizeObserver(() => drawRuler(rulerX, -20.5, 417.5, false)).observe(rulerX);
  new ResizeObserver(() => drawRuler(rulerY, 94, 375.5, true)).observe(rulerY);
</script>

</body>
</html>
